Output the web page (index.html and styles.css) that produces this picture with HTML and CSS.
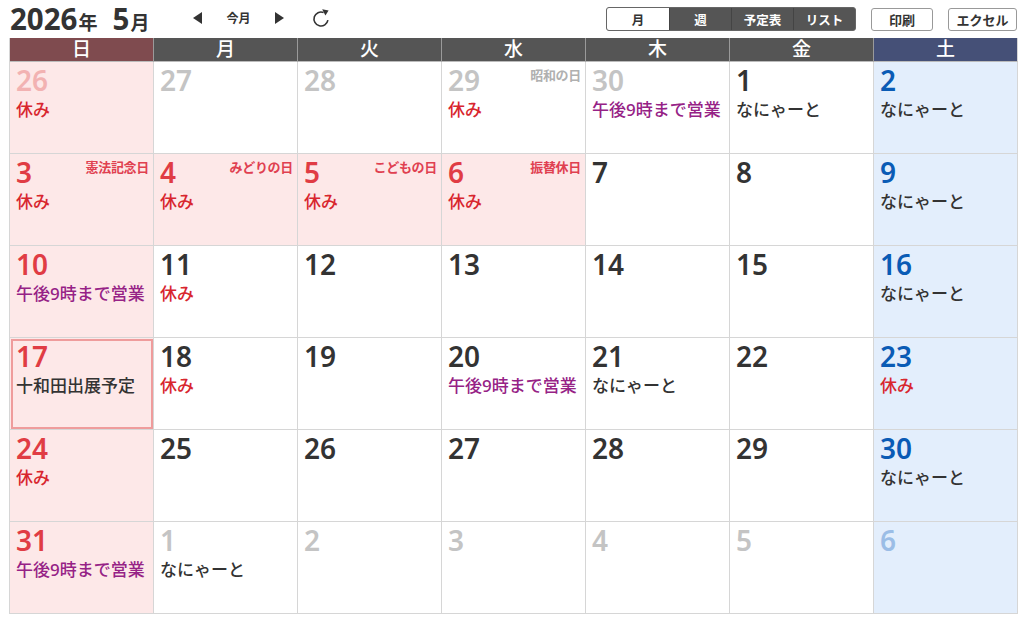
FILE: index.html
```html
<!DOCTYPE html>
<html lang="ja">
<head>
<meta charset="utf-8">
<title>カレンダー</title>
<link rel="stylesheet" href="styles.css">
</head>
<body>
<div class="page">
  <div class="toolbar">
    <div class="title"><span class="yr">2026</span><span class="unit">年</span><span class="mo">5</span><span class="unit">月</span></div>
    <div class="nav">
      <span class="arrow"><svg width="10" height="12" viewBox="0 0 10 12"><polygon points="9,0 9,12 0,6" fill="#333"/></svg></span>
      <span class="today-link">今月</span>
      <span class="arrow"><svg width="10" height="12" viewBox="0 0 10 12"><polygon points="1,0 1,12 10,6" fill="#333"/></svg></span>
      <span class="reload"><svg width="20" height="20" viewBox="0 0 20 20"><path d="M12.6 4.5 A7 7 0 1 0 16.9 12.2" fill="none" stroke="#333" stroke-width="1.6"/><polygon points="11.2,1.2 17.6,2.6 14.4,7.6" fill="#333"/></svg></span>
    </div>
    <div class="spacer"></div>
    <div class="seg">
      <span class="seg-btn active">月</span>
      <span class="seg-btn">週</span>
      <span class="seg-btn">予定表</span>
      <span class="seg-btn">リスト</span>
    </div>
    <span class="btn btn-print">印刷</span>
    <span class="btn btn-excel">エクセル</span>
  </div>

  <div class="cal">
    <div class="hd sun">日</div>
    <div class="hd">月</div>
    <div class="hd">火</div>
    <div class="hd">水</div>
    <div class="hd">木</div>
    <div class="hd">金</div>
    <div class="hd sat">土</div>

    <div class="cell sun other"><div class="top"><span class="num">26</span></div><div class="ev red">休み</div></div>
    <div class="cell other"><div class="top"><span class="num">27</span></div></div>
    <div class="cell other"><div class="top"><span class="num">28</span></div></div>
    <div class="cell other"><div class="top"><span class="num">29</span><span class="hol">昭和の日</span></div><div class="ev red">休み</div></div>
    <div class="cell other"><div class="top"><span class="num">30</span></div><div class="ev purple">午後9時まで営業</div></div>
    <div class="cell"><div class="top"><span class="num">1</span></div><div class="ev">なにゃーと</div></div>
    <div class="cell sat"><div class="top"><span class="num">2</span></div><div class="ev">なにゃーと</div></div>

    <div class="cell sun"><div class="top"><span class="num">3</span><span class="hol">憲法記念日</span></div><div class="ev red">休み</div></div>
    <div class="cell holiday"><div class="top"><span class="num">4</span><span class="hol">みどりの日</span></div><div class="ev red">休み</div></div>
    <div class="cell holiday"><div class="top"><span class="num">5</span><span class="hol">こどもの日</span></div><div class="ev red">休み</div></div>
    <div class="cell holiday"><div class="top"><span class="num">6</span><span class="hol">振替休日</span></div><div class="ev red">休み</div></div>
    <div class="cell"><div class="top"><span class="num">7</span></div></div>
    <div class="cell"><div class="top"><span class="num">8</span></div></div>
    <div class="cell sat"><div class="top"><span class="num">9</span></div><div class="ev">なにゃーと</div></div>

    <div class="cell sun"><div class="top"><span class="num">10</span></div><div class="ev purple">午後9時まで営業</div></div>
    <div class="cell"><div class="top"><span class="num">11</span></div><div class="ev red">休み</div></div>
    <div class="cell"><div class="top"><span class="num">12</span></div></div>
    <div class="cell"><div class="top"><span class="num">13</span></div></div>
    <div class="cell"><div class="top"><span class="num">14</span></div></div>
    <div class="cell"><div class="top"><span class="num">15</span></div></div>
    <div class="cell sat"><div class="top"><span class="num">16</span></div><div class="ev">なにゃーと</div></div>

    <div class="cell sun today"><div class="top"><span class="num">17</span></div><div class="ev">十和田出展予定</div></div>
    <div class="cell"><div class="top"><span class="num">18</span></div><div class="ev red">休み</div></div>
    <div class="cell"><div class="top"><span class="num">19</span></div></div>
    <div class="cell"><div class="top"><span class="num">20</span></div><div class="ev purple">午後9時まで営業</div></div>
    <div class="cell"><div class="top"><span class="num">21</span></div><div class="ev">なにゃーと</div></div>
    <div class="cell"><div class="top"><span class="num">22</span></div></div>
    <div class="cell sat"><div class="top"><span class="num">23</span></div><div class="ev red">休み</div></div>

    <div class="cell sun"><div class="top"><span class="num">24</span></div><div class="ev red">休み</div></div>
    <div class="cell"><div class="top"><span class="num">25</span></div></div>
    <div class="cell"><div class="top"><span class="num">26</span></div></div>
    <div class="cell"><div class="top"><span class="num">27</span></div></div>
    <div class="cell"><div class="top"><span class="num">28</span></div></div>
    <div class="cell"><div class="top"><span class="num">29</span></div></div>
    <div class="cell sat"><div class="top"><span class="num">30</span></div><div class="ev">なにゃーと</div></div>

    <div class="cell sun"><div class="top"><span class="num">31</span></div><div class="ev purple">午後9時まで営業</div></div>
    <div class="cell other"><div class="top"><span class="num">1</span></div><div class="ev">なにゃーと</div></div>
    <div class="cell other"><div class="top"><span class="num">2</span></div></div>
    <div class="cell other"><div class="top"><span class="num">3</span></div></div>
    <div class="cell other"><div class="top"><span class="num">4</span></div></div>
    <div class="cell other"><div class="top"><span class="num">5</span></div></div>
    <div class="cell sat other"><div class="top"><span class="num">6</span></div></div>
  </div>
</div>
</body>
</html>
```

FILE: styles.css
```css
* { box-sizing: border-box; }
html, body { margin: 0; padding: 0; background: #fff; }
body {
  font-family: "Noto Sans", "Noto Sans CJK JP", sans-serif;
  color: #333;
}
.page { padding: 0 7px 0 9px; }

.toolbar {
  height: 38px;
  display: flex;
  align-items: center;
}
.title {
  display: flex;
  align-items: baseline;
  font-weight: 700;
  color: #333;
  padding-left: 1px;
  line-height: 1;
}
.title .yr, .title .mo { font-size: 29.5px; }
.title .unit { font-size: 19px; margin-left: 1px; }
.title .mo { margin-left: 15px; }

.nav {
  display: flex;
  align-items: center;
  margin-left: 44px;
  margin-top: -2px;
}
.arrow { display: flex; align-items: center; }
.today-link {
  font-size: 12px;
  font-weight: 700;
  color: #333;
  margin: 0 24px 0 23px;
}
.reload { display: flex; margin-left: 27px; }

.spacer { flex: 1; }

.seg {
  display: flex;
  height: 24px;
  border: 1px solid #666;
  border-radius: 3px;
  overflow: hidden;
  background: #555;
}
.seg-btn {
  width: 62px;
  display: flex;
  align-items: center;
  justify-content: center;
  font-size: 12.5px;
  font-weight: 700;
  color: #fff;
  border-left: 1px solid #444;
}
.seg-btn:first-child { border-left: 0; }
.seg-btn.active { background: #fff; color: #333; }

.btn {
  height: 23px;
  display: flex;
  align-items: center;
  justify-content: center;
  font-size: 13px;
  font-weight: 700;
  color: #333;
  background: #fff;
  border: 1px solid #999;
  border-radius: 3px;
}
.btn-print { width: 62px; margin-left: 15px; }
.btn-excel { width: 69px; margin-left: 15px; }

.cal {
  display: grid;
  grid-template-columns: repeat(7, 144px);
  grid-template-rows: 24px repeat(6, 92px);
  border-left: 1px solid #d6d6d6;
  width: 1009px;
}
.hd {
  background: #555;
  color: #fff;
  font-size: 19px;
  font-weight: 500;
  display: flex;
  align-items: center;
  justify-content: center;
  border-right: 1px solid #9a9a9a;
  border-bottom: 1px solid #bbb;
  line-height: 1;
}
.hd.sun { background: #7f4b4f; }
.hd.sat { background: #455077; border-right-color: #d6d6d6; }

.cell {
  border-right: 1px solid #d6d6d6;
  border-bottom: 1px solid #d6d6d6;
  padding: 2px 4px 0 6px;
  background: #fff;
}
.cell.sun, .cell.holiday { background: #fde8e8; }
.cell.sat { background: #e3eefc; }
.cell.today {
  outline: 2px solid #ef9c9c;
  outline-offset: -3px;
}

.top {
  display: flex;
  justify-content: space-between;
  align-items: flex-start;
  height: 32px;
}
.num {
  font-size: 28px;
  line-height: 32px;
  font-weight: 600;
  color: #333;
}
.cell.sun .num, .cell.holiday .num { color: #e03c44; }
.cell.sat .num { color: #0a5bb5; }
.cell.other .num { color: #c4c4c4; }
.cell.sun.other .num { color: #f2b2b2; }
.cell.sat.other .num { color: #9bbde6; }

.hol {
  font-size: 13px;
  line-height: 16px;
  font-weight: 700;
  color: #e04050;
  margin-top: 3px;
  letter-spacing: -0.3px;
}
.cell.other .hol { color: #b0b0b0; }

.ev {
  font-size: 17px;
  line-height: 22px;
  font-weight: 500;
  color: #333;
  margin-top: 3px;
  white-space: nowrap;
}
.ev.red { color: #d8262e; }
.ev.purple { color: #962286; }
```
